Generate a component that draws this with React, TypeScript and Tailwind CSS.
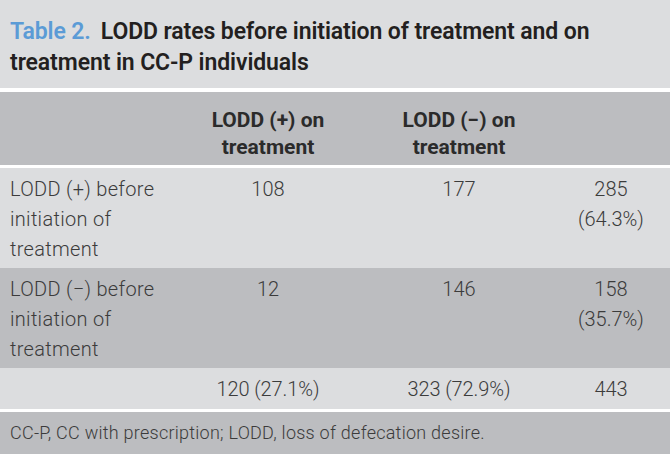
const rows = [
  {
    label: ["LODD (+) before", "initiation of", "treatment"],
    pos: "108",
    neg: "177",
    total: ["285", "(64.3%)"],
    bg: "bg-[#dcdddf]",
  },
  {
    label: ["LODD (−) before", "initiation of", "treatment"],
    pos: "12",
    neg: "146",
    total: ["158", "(35.7%)"],
    bg: "bg-[#bcbdc0]",
  },
]

export default function App() {
  return (
    <div className="h-[454px] w-[670px] overflow-hidden bg-white font-['Roboto',sans-serif] text-[#3b3b3b]">
      <div className="h-[88px] bg-[#dcdddf] px-[10px] pt-[16px] text-[23px] font-semibold leading-[31px] tracking-[-0.1px] text-[#231f20]">
        <span className="text-[#5b9bd6]">Table 2.</span>
        <span className="ml-[10px]">LODD rates before initiation of treatment and on</span>
        <br />
        treatment in CC-P individuals
      </div>

      <div className="mt-[4px] grid h-[73px] grid-cols-[178px_180px_202px_1fr] bg-[#bcbdc0] pt-[15px] text-[21px] font-bold leading-[27px] text-[#2b2b2b]">
        <div />
        <div className="text-center">
          LODD (+) on
          <br />
          treatment
        </div>
        <div className="text-center">
          LODD (−) on
          <br />
          treatment
        </div>
        <div />
      </div>

      <div className="mt-[3px]">
        {rows.map((r, i) => (
          <div
            key={i}
            className={`grid h-[100px] grid-cols-[178px_180px_202px_1fr] pt-[6px] text-[20px] font-light leading-[30px] ${r.bg}`}
          >
            <div className="pl-[10px] tracking-[0.3px]">
              {r.label.map((l) => (
                <div key={l}>{l}</div>
              ))}
            </div>
            <div className="text-center">{r.pos}</div>
            <div className="text-center">{r.neg}</div>
            <div className="pr-[8px] text-center">
              {r.total.map((t) => (
                <div key={t}>{t}</div>
              ))}
            </div>
          </div>
        ))}
        <div className="grid h-[41px] grid-cols-[178px_180px_202px_1fr] items-center bg-[#dcdddf] text-[20px] font-light leading-[30px] tracking-[-0.1px]">
          <div />
          <div className="text-center">120 (27.1%)</div>
          <div className="text-center">323 (72.9%)</div>
          <div className="pr-[8px] text-center">443</div>
        </div>
      </div>

      <div className="mt-[3px] h-[42px] bg-[#bcbdc0] px-[10px] pt-[8px] text-[18px] font-light leading-[26px] tracking-[0.25px]">
        CC-P, CC with prescription; LODD, loss of defecation desire.
      </div>
    </div>
  )
}
